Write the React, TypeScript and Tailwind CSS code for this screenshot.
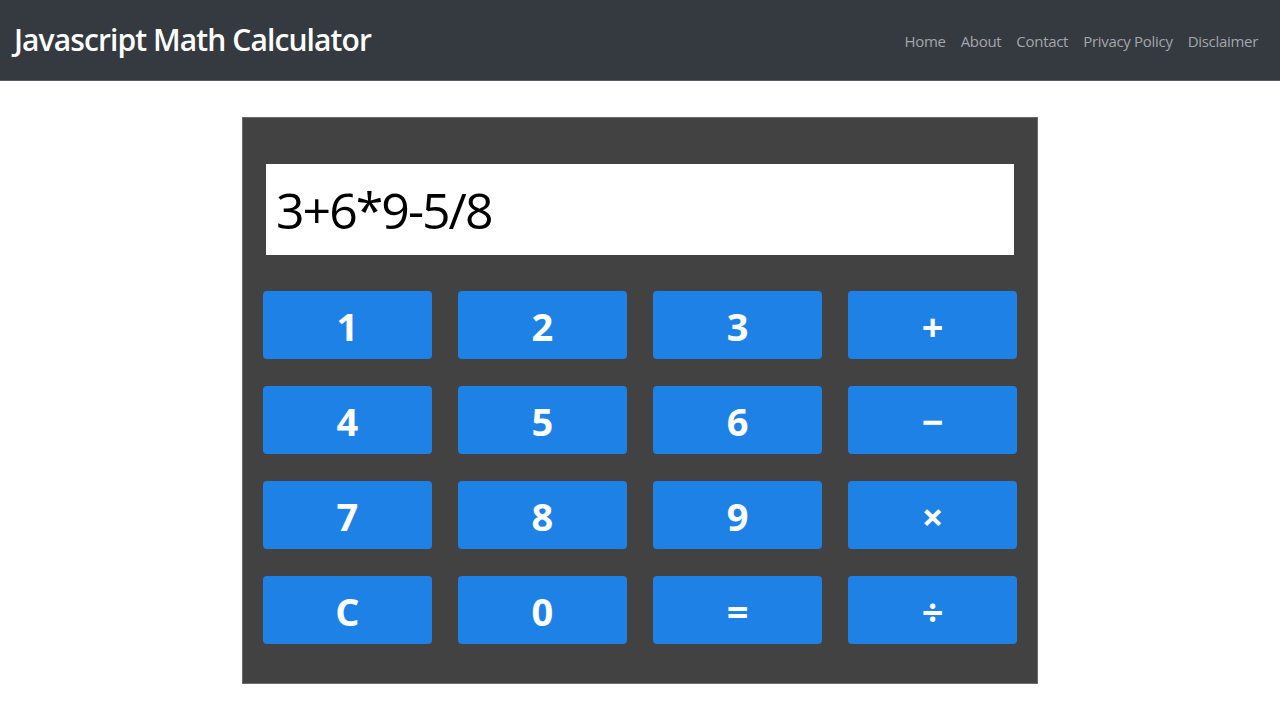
const keys = ["1", "2", "3", "+", "4", "5", "6", "\u2212", "7", "8", "9", "\u00d7", "C", "0", "=", "\u00f7"];

const navLinks = ["Home", "About", "Contact", "Privacy Policy", "Disclaimer"];

const App = () => {
  return (
    <div className="min-h-screen bg-white" style={{ fontFamily: '"Open Sans", "Noto Sans", sans-serif' }}>
      <nav className="h-[81px] bg-[#343a40] border-b border-[#5a5f66] flex items-center justify-between pl-[14px] pr-[22px]">
        <h1 className="text-white text-[30px] font-semibold tracking-[-0.9px] leading-none">Javascript Math Calculator</h1>
        <ul className="flex items-center gap-[15px] text-[15px] tracking-[-0.3px] text-[#a3a6aa] pt-[2px]">
          {navLinks.map((l) => (
            <li key={l}>{l}</li>
          ))}
        </ul>
      </nav>
      <div className="flex justify-center pt-[36px]">
        <div className="w-[796px] h-[567px] bg-[#424242] border border-[#6b6b6b] px-[20px] pt-[46px]">
          <div className="mx-[3px] h-[91px] bg-white flex items-center px-[10px]">
            <span className="text-[50px] text-black tracking-[-2px] pt-[2px]">3+6*9-5/8</span>
          </div>
          <div className="grid grid-cols-4 gap-x-[26.5px] gap-y-[27px] mt-[36px]">
            {keys.map((k) => (
              <button
                key={k}
                className="h-[68px] rounded-[4px] bg-[#1e81e6] text-white text-[38px] font-bold flex items-center justify-center pt-[2px]"
              >
                {k}
              </button>
            ))}
          </div>
        </div>
      </div>
    </div>
  );
};

export default App;
